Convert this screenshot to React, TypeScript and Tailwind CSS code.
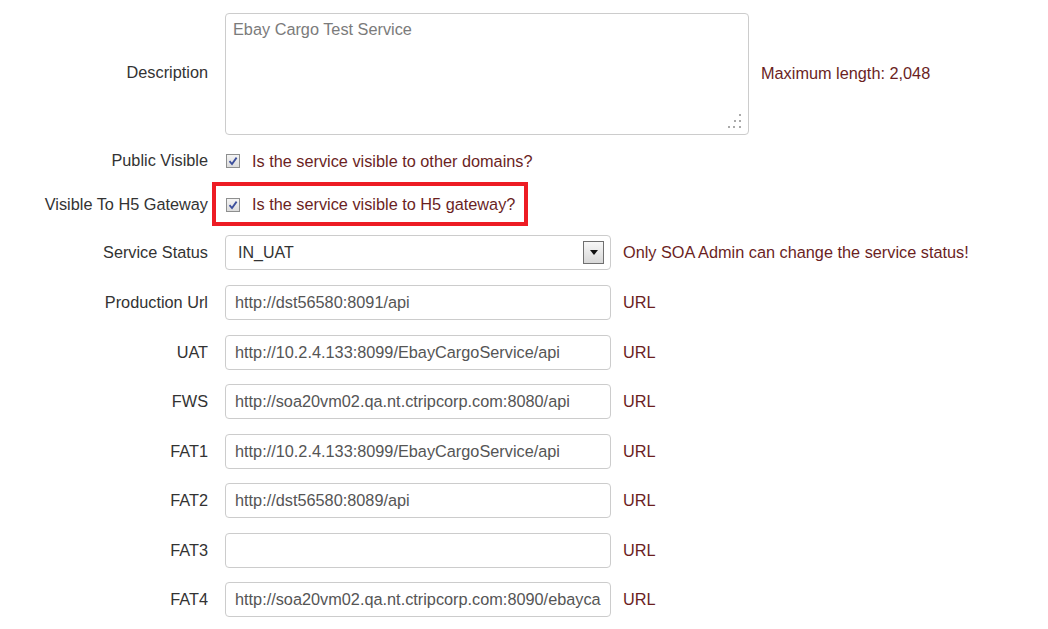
import React from 'react';

const urls = [
  { label: 'Production Url', value: 'http://dst56580:8091/api' },
  { label: 'UAT', value: 'http://10.2.4.133:8099/EbayCargoService/api' },
  { label: 'FWS', value: 'http://soa20vm02.qa.nt.ctripcorp.com:8080/api' },
  { label: 'FAT1', value: 'http://10.2.4.133:8099/EbayCargoService/api' },
  { label: 'FAT2', value: 'http://dst56580:8089/api' },
  { label: 'FAT3', value: '' },
  { label: 'FAT4', value: 'http://soa20vm02.qa.nt.ctripcorp.com:8090/ebaycargoservice/api' },
];

function Checkbox() {
  return (
    <span className="flex h-[14px] w-[14px] shrink-0 items-center justify-center border border-[#8e8f8f] bg-gradient-to-b from-[#f4f4f4] to-[#dcdcdc]">
      <svg width="10" height="10" viewBox="0 0 10 10">
        <path d="M1.5 5.2 L4 8 L8.6 1.6" fill="none" stroke="#3c4f9c" strokeWidth="1.8" />
      </svg>
    </span>
  );
}

function Row({ label, labelClass = '', children }: { label: string; labelClass?: string; children: React.ReactNode }) {
  return (
    <div className="flex items-center">
      <div className={`w-[208px] shrink-0 text-right text-[16.3px] text-[#333] ${labelClass}`}>{label}</div>
      <div className="ml-[17px] flex items-center">{children}</div>
    </div>
  );
}

export default function App() {
  return (
    <div className="min-h-[629px] w-[1048px] bg-white pt-[13px] font-['Liberation_Sans',Arial,sans-serif]">
      <Row label="Description" labelClass="mb-[4px]">
        <div className="relative h-[122px] w-[524px] rounded-[4px] border border-[#ccc] px-[7px] pt-[3px] text-[16.3px] text-[#7b7b7b]">
          Ebay Cargo Test Service
          <svg className="absolute bottom-[6px] right-[6px]" width="14" height="14" viewBox="0 0 14 14">
            <rect x="11" y="0" width="2" height="2" fill="#aaa" />
            <rect x="6" y="6" width="2" height="2" fill="#aaa" />
            <rect x="11" y="6" width="2" height="2" fill="#aaa" />
            <rect x="0" y="12" width="2" height="2" fill="#aaa" />
            <rect x="5" y="12" width="2" height="2" fill="#aaa" />
            <rect x="11" y="12" width="2" height="2" fill="#aaa" />
          </svg>
        </div>
        <span className="mb-[2px] ml-[12px] text-[16.3px] text-[#6b1f1f]">Maximum length: 2,048</span>
      </Row>

      <div className="mt-[11px] h-[26px]">
        <Row label="Public Visible">
          <div className="mt-[3px] flex items-center">
            <span className="ml-[1px]">
              <Checkbox />
            </span>
            <span className="ml-[12px] text-[16.3px] text-[#6b1f1f]">Is the service visible to other domains?</span>
          </div>
        </Row>
      </div>

      <div className="mt-[10px]">
        <Row label="Visible To H5 Gateway">
          <div className="-ml-[13px] flex h-[44px] w-[316px] items-center border-4 border-[#ed1c24] pl-[10px]">
            <span className="mt-[2px]">
              <Checkbox />
            </span>
            <span className="ml-[12px] text-[16.3px] text-[#6b1f1f]">Is the service visible to H5 gateway?</span>
          </div>
        </Row>
      </div>

      <div className="mt-[9px]">
        <Row label="Service Status">
          <div className="flex h-[35px] w-[386px] items-center justify-between rounded-[4px] border border-[#ccc] pl-[12px] pr-[6px] text-[16px] text-[#333]">
            <span>IN_UAT</span>
            <span className="flex h-[23px] w-[21px] items-center justify-center border border-[#707070] bg-gradient-to-b from-[#f7f7f7] to-[#d8d8d8]">
              <svg width="8" height="5" viewBox="0 0 8 5">
                <path d="M0 0 H8 L4 5 Z" fill="#111" />
              </svg>
            </span>
          </div>
          <span className="ml-[12px] text-[16.3px] text-[#6b1f1f]">Only SOA Admin can change the service status!</span>
        </Row>
      </div>

      <div className="mt-[15px] flex flex-col gap-[14.5px]">
        {urls.map((u) => (
          <Row key={u.label} label={u.label}>
            <input
              readOnly
              value={u.value}
              className="h-[35px] w-[386px] rounded-[4px] border border-[#ccc] px-[9px] font-['Liberation_Sans',Arial,sans-serif] text-[16.3px] text-[#555] outline-none"
            />
            <span className="ml-[12px] text-[16.3px] text-[#6b1f1f]">URL</span>
          </Row>
        ))}
      </div>
    </div>
  );
}
